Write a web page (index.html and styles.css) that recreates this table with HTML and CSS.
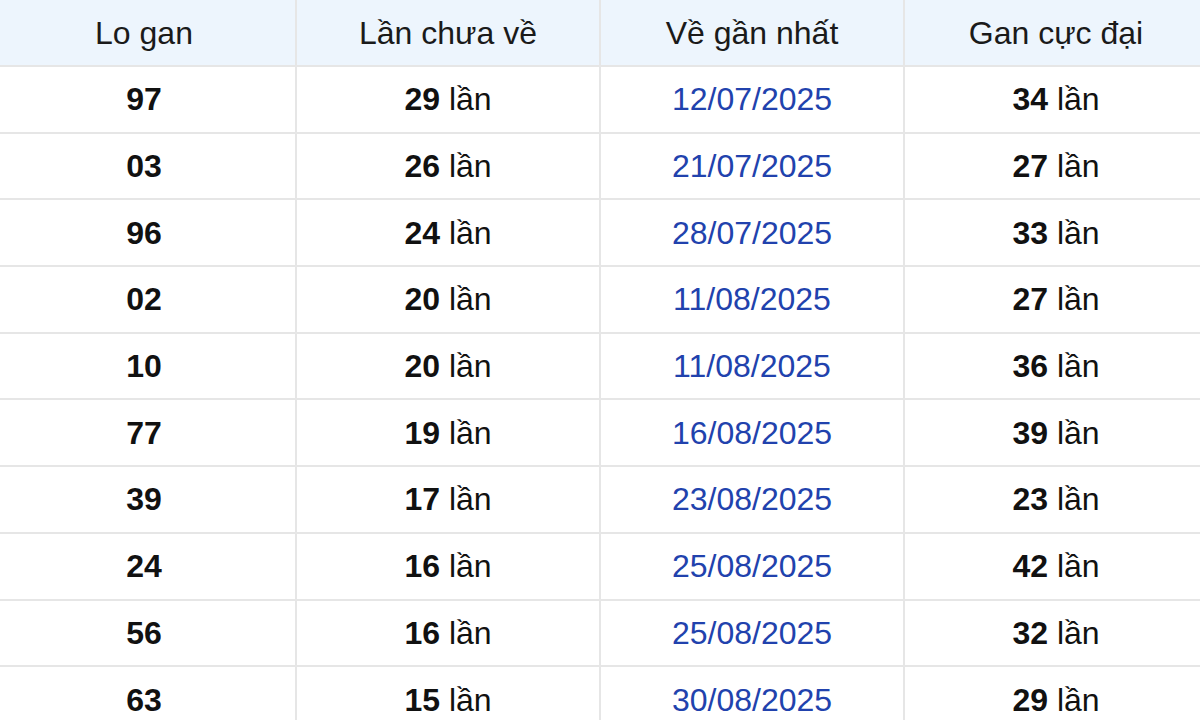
FILE: index.html
```html
<!DOCTYPE html>
<html lang="vi">
<head>
<meta charset="utf-8">
<title>Lo gan</title>
<link rel="stylesheet" href="styles.css">
</head>
<body>
<table class="gan-table">
  <thead>
    <tr><th>Lo gan</th><th>Lần chưa về</th><th>Về gần nhất</th><th>Gan cực đại</th></tr>
  </thead>
  <tbody>
    <tr><td class="num">97</td><td><b>29</b> lần</td><td class="date">12/07/2025</td><td><b>34</b> lần</td></tr>
    <tr><td class="num">03</td><td><b>26</b> lần</td><td class="date">21/07/2025</td><td><b>27</b> lần</td></tr>
    <tr><td class="num">96</td><td><b>24</b> lần</td><td class="date">28/07/2025</td><td><b>33</b> lần</td></tr>
    <tr><td class="num">02</td><td><b>20</b> lần</td><td class="date">11/08/2025</td><td><b>27</b> lần</td></tr>
    <tr><td class="num">10</td><td><b>20</b> lần</td><td class="date">11/08/2025</td><td><b>36</b> lần</td></tr>
    <tr><td class="num">77</td><td><b>19</b> lần</td><td class="date">16/08/2025</td><td><b>39</b> lần</td></tr>
    <tr><td class="num">39</td><td><b>17</b> lần</td><td class="date">23/08/2025</td><td><b>23</b> lần</td></tr>
    <tr><td class="num">24</td><td><b>16</b> lần</td><td class="date">25/08/2025</td><td><b>42</b> lần</td></tr>
    <tr><td class="num">56</td><td><b>16</b> lần</td><td class="date">25/08/2025</td><td><b>32</b> lần</td></tr>
    <tr><td class="num">63</td><td><b>15</b> lần</td><td class="date">30/08/2025</td><td><b>29</b> lần</td></tr>
  </tbody>
</table>
</body>
</html>
```
FILE: styles.css
```css
html, body {
  margin: 0;
  padding: 0;
  background: #ffffff;
  overflow: hidden;
}
body {
  font-family: "Liberation Sans", Arial, sans-serif;
  color: #111111;
}
.gan-table {
  margin-left: -9px;
  width: 1218px;
  table-layout: fixed;
  border-collapse: collapse;
  font-size: 32px;
}
.gan-table th,
.gan-table td {
  border: 2px solid #e6e6e6;
  text-align: center;
  vertical-align: middle;
  padding: 0;
  height: 64.7px;
  line-height: 1;
}
.gan-table thead th {
  background: #edf5fd;
  font-weight: normal;
  color: #1a1a1a;
  height: 65px;
  border-top: none;
}
.gan-table td b,
.gan-table td.num {
  font-weight: bold;
}
.gan-table td.date {
  color: #2142ad;
}
```
